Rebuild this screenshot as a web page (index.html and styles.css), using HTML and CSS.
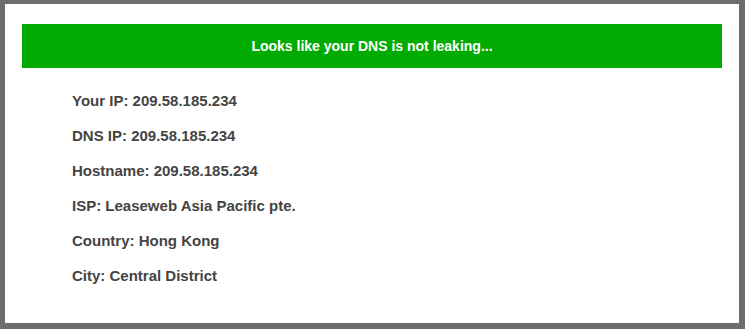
FILE: index.html
```html
<!DOCTYPE html>
<html>
<head>
<meta charset="utf-8">
<link rel="stylesheet" href="styles.css">
</head>
<body>
<div class="frame">
  <div class="card">
    <div class="banner">Looks like your DNS is not leaking...</div>
    <ul class="info">
      <li>Your IP: 209.58.185.234</li>
      <li>DNS IP: 209.58.185.234</li>
      <li>Hostname: 209.58.185.234</li>
      <li>ISP: Leaseweb Asia Pacific pte.</li>
      <li>Country: Hong Kong</li>
      <li>City: Central District</li>
    </ul>
  </div>
</div>
</body>
</html>
```
FILE: styles.css
```css
html, body {
  margin: 0;
  padding: 0;
  height: 100%;
}
body {
  background: #6d6d6d;
  font-family: "Liberation Sans", Arial, sans-serif;
}
.frame {
  box-sizing: border-box;
  height: 329px;
  width: 745px;
  padding: 4px 6px 6px 5px;
  display: flex;
}
.card {
  flex: 1;
  background: #ffffff;
  padding: 20px 17px 0 17px;
}
.banner {
  height: 44px;
  background: #02ab02;
  color: #ffffff;
  font-weight: bold;
  font-size: 14px;
  display: flex;
  align-items: center;
  justify-content: center;
}
.info {
  list-style: none;
  margin: 15px 0 0 0;
  padding: 0 0 0 50px;
}
.info li {
  font-size: 15px;
  font-weight: bold;
  color: #444444;
  line-height: 35px;
}
```
